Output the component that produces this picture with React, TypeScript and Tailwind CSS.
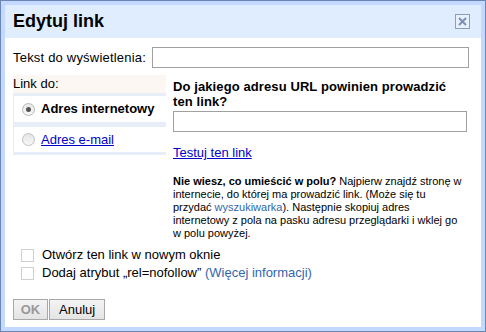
import React from "react";

export default function App() {
  return (
    <div className="w-[486px] h-[332px] bg-white" style={{ fontFamily: '"Liberation Sans", Arial, sans-serif' }}>
      <div className="w-[486px] h-[332px] border border-[#6b86b3] bg-[#c3d9ff] p-[4px]">
        <div className="flex h-full flex-col bg-white">
          <div className="flex h-[33px] items-center justify-between bg-[#e0edfe] pl-[8px] pr-[11px]">
            <span className="text-[18px] font-bold text-black">Edytuj link</span>
            <div className="flex h-[15px] w-[15px] items-center justify-center border border-[#8c9cbf] bg-[#e8f0fd]">
              <svg width="11" height="11" viewBox="0 0 11 11">
                <path d="M2 2 L9 9 M9 2 L2 9" stroke="#7d8fb6" strokeWidth="2" />
              </svg>
            </div>
          </div>
          <div className="flex flex-1 flex-col px-[8px]">
            <div className="mt-[9px] flex items-center">
              <span className="w-[139px] shrink-0 text-[13px] tracking-[0.2px] text-black">Tekst do wyświetlenia:</span>
              <input className="h-[21px] w-[317px] border border-[#a0a0a0] bg-white outline-none" />
            </div>
            <div className="mt-[7px] flex">
              <div className="w-[153px] shrink-0">
                <div className="h-[18px] bg-[#fdf7f3] text-[13px] leading-[18px] text-black">Link do:</div>
                <div className="bg-[#e8eef7] py-[3px] pl-[1px]">
                  <div className="flex h-[26px] items-center bg-white pl-[8px]">
                    <span className="mr-[6px] flex h-[13px] w-[13px] items-center justify-center rounded-full border border-[#b8b8b8] bg-gradient-to-b from-[#e8e8e8] to-[#f8f8f8]">
                      <span className="h-[5px] w-[5px] rounded-full bg-[#555]" />
                    </span>
                    <span className="text-[13px] font-bold text-black">Adres internetowy</span>
                  </div>
                  <div className="mt-[5px] flex h-[25px] items-center bg-white pl-[8px]">
                    <span className="mr-[6px] h-[13px] w-[13px] rounded-full border border-[#c0c0c0] bg-gradient-to-b from-[#e4e4e4] to-[#f8f8f8]" />
                    <span className="text-[13px] text-[#0000cc] underline">Adres e-mail</span>
                  </div>
                </div>
              </div>
              <div className="ml-[7px] flex-1 pr-[10px]">
                <div className="mt-[4px] w-[285px] text-[13px] font-bold leading-[15px] tracking-[0.1px] text-black">
                  Do jakiego adresu URL powinien prowadzić ten link?
                </div>
                <input className="mt-[1px] h-[21px] w-[294px] border border-[#a0a0a0] bg-white outline-none" />
                <div className="mt-[12px] text-[13px] leading-[15px] text-[#0000cc] underline">Testuj ten link</div>
                <div className="mt-[15px] text-[11px] leading-[13px] text-black">
                  <span className="font-bold">Nie wiesz, co umieścić w polu?</span> Najpierw znajdź stronę w internecie, do
                  której ma prowadzić link. (Może się tu przydać <span className="text-[#3366aa]">wyszukiwarka</span>).
                  Następnie skopiuj adres internetowy z pola na pasku adresu przeglądarki i wklej go w polu powyżej.
                </div>
              </div>
            </div>
            <div className="mt-[7px] flex flex-col gap-[2px] pl-[8px]">
              <div className="flex items-center">
                <span className="mr-[8px] h-[13px] w-[13px] border border-[#d0d0d0] bg-white" />
                <span className="text-[13px] leading-[16px] text-black">Otwórz ten link w nowym oknie</span>
              </div>
              <div className="flex items-center">
                <span className="mr-[8px] h-[13px] w-[13px] border border-[#d0d0d0] bg-white" />
                <span className="text-[13px] leading-[16px] text-black">
                  Dodaj atrybut „rel=nofollow” <span className="text-[#3366aa]">(Więcej informacji)</span>
                </span>
              </div>
            </div>
            <div className="mt-[18px] flex">
              <button className="h-[21px] w-[35px] border border-[#a8a8a8] bg-gradient-to-b from-[#f4f4f4] to-[#e4e4e4] text-[13px] font-bold leading-[19px] text-[#999]">
                OK
              </button>
              <button className="ml-[1px] h-[21px] border border-[#a8a8a8] bg-gradient-to-b from-[#f4f4f4] to-[#e4e4e4] px-[9px] text-[13px] leading-[19px] text-black">
                Anuluj
              </button>
            </div>
          </div>
        </div>
      </div>
    </div>
  );
}
